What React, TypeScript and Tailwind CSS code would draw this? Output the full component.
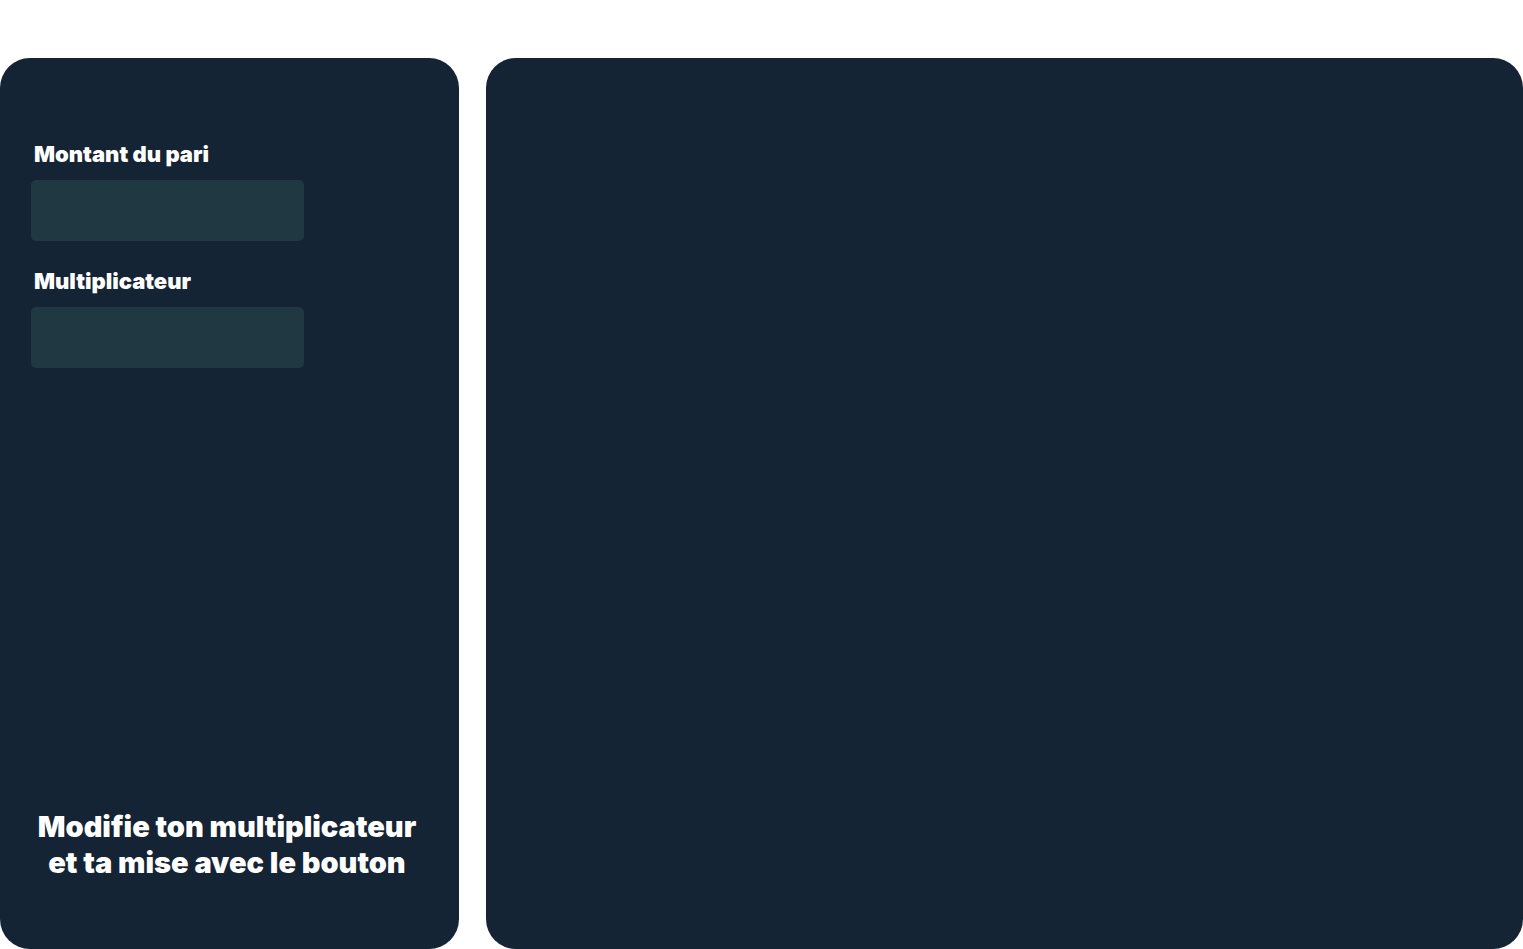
import React from "react";

function Field({ id, label }: { id: string; label: string }) {
  return (
    <div className="flex flex-col gap-3">
      <label htmlFor={id} className="pl-[3px] text-[22px] leading-7 font-black text-white">
        {label}
      </label>
      <input
        id={id}
        type="text"
        className="h-[61px] w-[273px] max-w-full rounded-[5px] bg-[#203841] px-4 text-xl text-white outline-none"
      />
    </div>
  );
}

export default function App() {
  return (
    <main className="flex min-h-screen gap-[27px] bg-white pt-[58px] font-['Inter',sans-serif]">
      <aside className="flex w-[459px] shrink-0 flex-col justify-between rounded-[30px] bg-[#142434] pt-[82px] pr-9 pb-[68px] pl-[31px]">
        <form className="flex flex-col gap-[26px]">
          <Field id="bet" label="Montant du pari" />
          <Field id="multiplier" label="Multiplicateur" />
        </form>
        <p className="text-center text-[29px] leading-9 font-black whitespace-nowrap text-white">
          Modifie ton multiplicateur
          <br />
          et ta mise avec le bouton
        </p>
      </aside>
      <section className="min-w-0 flex-1 rounded-[30px] bg-[#142434]" />
    </main>
  );
}
